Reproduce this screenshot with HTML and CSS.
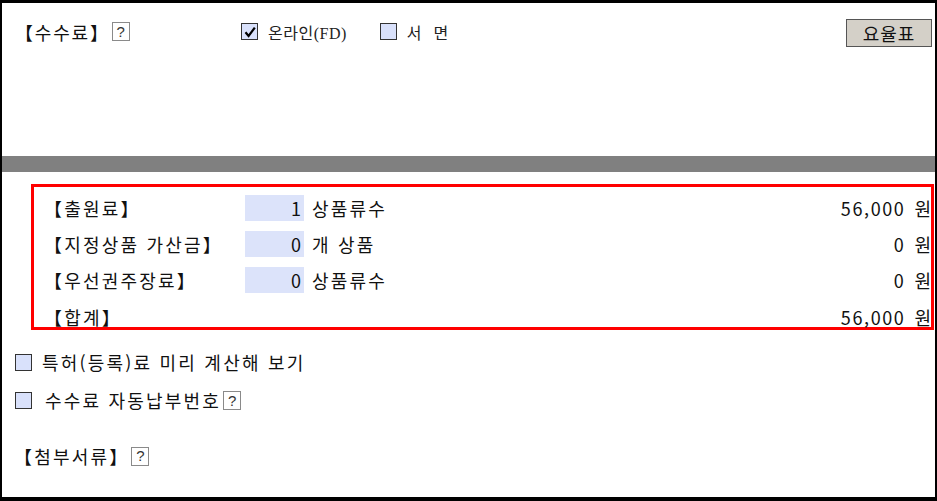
FILE: index.html
```html
<!DOCTYPE html>
<html lang="ko">
<head>
<meta charset="utf-8">
<title>수수료</title>
<link rel="stylesheet" href="styles.css">
</head>
<body>
<div class="frame">
  <section class="top">
    <div class="top-row">
      <div class="title">【수수료】<span class="help">?</span></div>
      <label class="opt"><span class="cb"><svg viewBox="0 0 14 14" width="14" height="14"><path d="M2.5 7.2 L5.6 11 L11.8 2.6" fill="none" stroke="#000" stroke-width="2.2"/></svg></span><span class="opt-text">온라인(FD)</span></label>
      <label class="opt"><span class="cb"></span><span class="opt-text wide">서 면</span></label>
      <button class="rate-btn">요율표</button>
    </div>
  </section>
  <div class="bar"></div>
  <div class="fee-box">
    <div class="fee-row"><span class="label">【출원료】</span><span class="num">1</span><span class="unit">상품류수</span><span class="amount">56,000</span><span class="won">원</span></div>
    <div class="fee-row"><span class="label">【지정상품 가산금】</span><span class="num">0</span><span class="unit">개 상품</span><span class="amount">0</span><span class="won">원</span></div>
    <div class="fee-row"><span class="label">【우선권주장료】</span><span class="num">0</span><span class="unit">상품류수</span><span class="amount">0</span><span class="won">원</span></div>
    <div class="fee-row total"><span class="label">【합계】</span><span class="blank"></span><span class="unit"></span><span class="amount">56,000</span><span class="won">원</span></div>
  </div>
  <div class="extra">
    <label class="opt-line"><span class="cb"></span><span>특허(등록)료 미리 계산해 보기</span></label>
    <label class="opt-line"><span class="cb"></span><span class="indent">수수료 자동납부번호</span><span class="help">?</span></label>
  </div>
  <div class="attach">【첨부서류】<span class="help">?</span></div>
</div>
</body>
</html>
```

FILE: styles.css
```css
html, body {
  margin: 0;
  padding: 0;
  background: #fff;
}

body {
  font-family: "Noto Sans CJK KR", "Noto Sans", sans-serif;
  font-size: 18px;
  color: #111;
}

.frame {
  box-sizing: border-box;
  width: 937px;
  height: 501px;
  border-style: solid;
  border-color: #000;
  border-width: 3px 2px 4px 2px;
  display: flex;
  flex-direction: column;
  overflow: hidden;
}

.top {
  height: 153px;
}

.top-row {
  display: flex;
  align-items: center;
  height: 28px;
  margin-top: 16px;
  padding-left: 13px;
  padding-right: 3px;
}

.title {
  display: flex;
  align-items: center;
  width: 226px;
  letter-spacing: 1.8px;
  line-height: 24px;
  margin-top: -3px;
}

.help {
  box-sizing: border-box;
  display: inline-flex;
  align-items: center;
  justify-content: center;
  width: 18px;
  height: 19px;
  border: 1px solid #8a8a8a;
  font-family: "Liberation Sans", sans-serif;
  font-size: 15px;
  letter-spacing: 0;
  color: #333;
  margin-left: 2px;
}

.opt {
  display: flex;
  align-items: center;
  margin-right: 33px;
  margin-top: -3px;
}

.opt-text {
  font-family: "Liberation Serif", "Noto Sans CJK KR", serif;
  font-size: 16px;
  color: #222;
  letter-spacing: 0.5px;
}

.opt-text.wide {
  letter-spacing: 4px;
}

.cb {
  box-sizing: border-box;
  display: inline-flex;
  align-items: center;
  justify-content: center;
  width: 17px;
  height: 17px;
  border: 1px solid #333;
  background: #d9e1fb;
  margin-right: 10px;
}

.rate-btn {
  margin-left: auto;
  box-sizing: border-box;
  width: 86px;
  height: 28px;
  background: #d4d0c8;
  border: 1px solid #555;
  font-family: "Noto Sans CJK KR", sans-serif;
  font-size: 18px;
  letter-spacing: 1px;
  color: #111;
  padding: 0;
  line-height: 24px;
}

.bar {
  height: 16px;
  background: #808080;
}

.fee-box {
  box-sizing: border-box;
  width: 903px;
  height: 146px;
  margin: 12px 0 0 29px;
  border: 3px solid #f00;
  padding: 3px 0 0 10px;
}

.fee-row {
  display: grid;
  grid-template-columns: 201px 59px 1fr auto auto;
  align-items: center;
  height: 36px;
  letter-spacing: 2.2px;
  line-height: 24px;
}

.fee-row.total {
  height: 31px;
  align-items: end;
}

.num {
  box-sizing: border-box;
  height: 26px;
  background: #dce3fa;
  text-align: right;
  padding-right: 3px;
  letter-spacing: 0;
  line-height: 26px;
}

.blank {
  height: 26px;
}

.unit {
  padding-left: 8px;
}

.amount {
  text-align: right;
  letter-spacing: 1.6px;
}

.won {
  margin-left: 9px;
  letter-spacing: 0;
}

.extra {
  display: flex;
  flex-direction: column;
  margin-top: 20px;
  padding-left: 13px;
}

.opt-line {
  display: flex;
  align-items: center;
  height: 24px;
  margin-bottom: 14px;
  letter-spacing: 2.2px;
}

.opt-line .indent {
  padding-left: 3px;
}

.attach {
  display: flex;
  align-items: center;
  margin-top: 18px;
  padding-left: 12px;
  letter-spacing: 2.2px;
  line-height: 24px;
}
```
